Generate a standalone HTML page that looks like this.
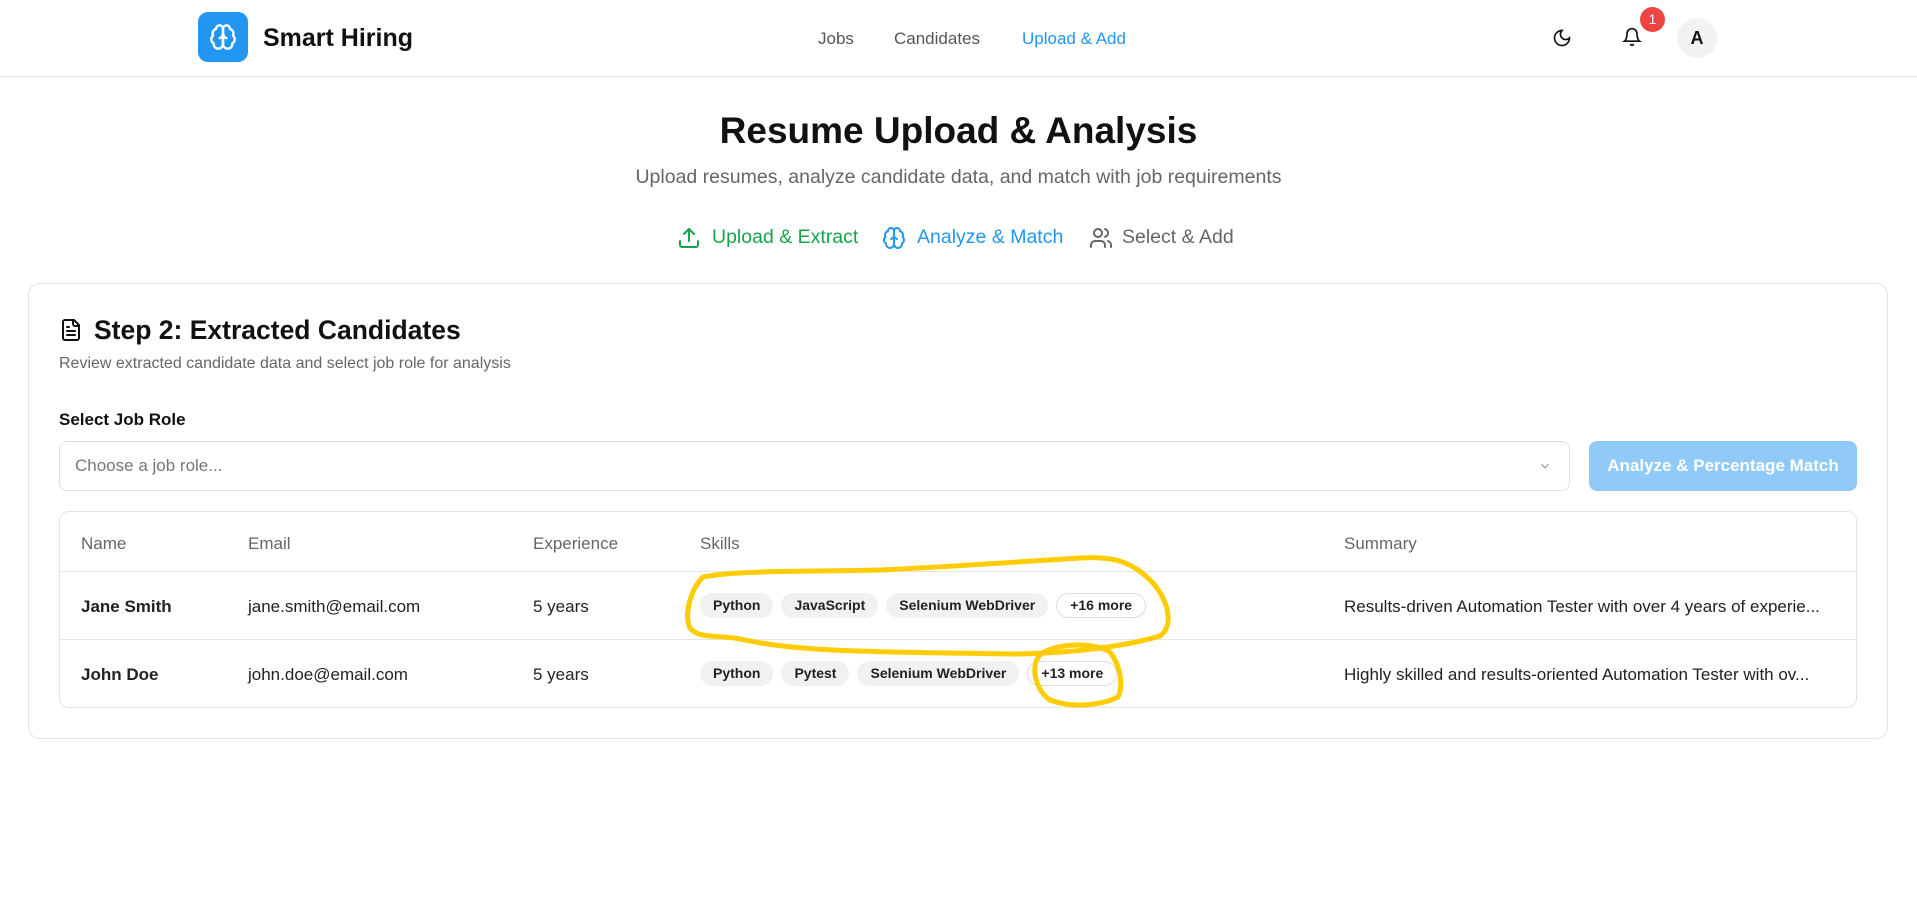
<!DOCTYPE html>
<html><head><meta charset="utf-8"><style>
*{box-sizing:border-box;margin:0;padding:0}
body{width:1917px;height:902px;background:#fff;font-family:"Liberation Sans",sans-serif;color:#111;position:relative;overflow:hidden}
.abs{position:absolute}
header{position:absolute;left:0;top:0;width:1917px;height:77px;border-bottom:1px solid #e5e5e5;box-shadow:0 1px 3px rgba(0,0,0,.05)}
.logo{left:198px;top:12px;width:50px;height:50px;background:#2196f3;border-radius:10px;display:flex;align-items:center;justify-content:center}
.nav{top:28px;font-size:17px;color:#555}
.chip{display:inline-block;height:25px;line-height:25px;padding:0 13px;border-radius:13px;background:#f1f1f1;font-size:14px;color:#222;margin-right:8px;font-weight:600}
.chip.more{background:#fff;border:1px solid #ddd;line-height:23px}
.td{position:absolute;font-size:17px;color:#222}
.th{position:absolute;font-size:17px;color:#666;top:534px}
</style></head><body>
<header>
<div class="abs logo"><svg width="28" height="28" viewBox="0 0 24 24" fill="none" stroke="#fff" stroke-width="2" stroke-linecap="round" stroke-linejoin="round"><path d="M12 5a3 3 0 1 0-5.997.125 4 4 0 0 0-2.526 5.77 4 4 0 0 0 .556 6.588A4 4 0 1 0 12 18Z"/><path d="M12 5a3 3 0 1 1 5.997.125 4 4 0 0 1 2.526 5.77 4 4 0 0 1-.556 6.588A4 4 0 1 1 12 18Z"/><path d="M15 13a4.5 4.5 0 0 1-3-4 4.5 4.5 0 0 1-3 4"/><path d="M12 18V5"/></svg></div>
<div class="abs" style="left:263px;top:24px;font-size:25px;font-weight:700">Smart Hiring</div>
<div class="abs nav" style="left:818px;top:29px">Jobs</div>
<div class="abs nav" style="left:894px;top:29px">Candidates</div>
<div class="abs nav" style="left:1022px;top:29px;color:#2196f3">Upload &amp; Add</div>
<svg class="abs" style="left:1552px;top:28px" width="20" height="20" viewBox="0 0 24 24" fill="none" stroke="#111" stroke-width="2" stroke-linecap="round"><path d="M12 3a6 6 0 0 0 9 9 9 9 0 1 1-9-9Z"/></svg>
<svg class="abs" style="left:1622px;top:27px" width="20" height="20" viewBox="0 0 24 24" fill="none" stroke="#111" stroke-width="2" stroke-linecap="round"><path d="M6 8a6 6 0 0 1 12 0c0 7 3 9 3 9H3s3-2 3-9"/><path d="M10.3 21a1.94 1.94 0 0 0 3.4 0"/></svg>
<div class="abs" style="left:1640px;top:7px;width:25px;height:25px;border-radius:50%;background:#ef4444;color:#fff;font-size:14px;text-align:center;line-height:25px">1</div>
<div class="abs" style="left:1677px;top:18px;width:40px;height:40px;border-radius:50%;background:#f2f2f2;text-align:center;line-height:40px;font-size:18px;font-weight:600">A</div>
</header>
<div class="abs" style="left:0;width:1917px;top:110px;text-align:center;font-size:37px;font-weight:700">Resume Upload &amp; Analysis</div>
<div class="abs" style="left:0;width:1917px;top:166px;text-align:center;font-size:19.5px;color:#666">Upload resumes, analyze candidate data, and match with job requirements</div>
<svg class="abs" style="left:677px;top:226px" width="24" height="24" viewBox="0 0 24 24" fill="none" stroke="#16a34a" stroke-width="2" stroke-linecap="round" stroke-linejoin="round"><path d="M21 15v4a2 2 0 0 1-2 2H5a2 2 0 0 1-2-2v-4"/><path d="M17 8l-5-5-5 5"/><path d="M12 3v12"/></svg>
<div class="abs" style="left:712px;top:226px;font-size:19.5px;color:#16a34a">Upload &amp; Extract</div>
<svg class="abs" style="left:882px;top:226px" width="24" height="24" viewBox="0 0 24 24" fill="none" stroke="#2196f3" stroke-width="2" stroke-linecap="round" stroke-linejoin="round"><path d="M12 5a3 3 0 1 0-5.997.125 4 4 0 0 0-2.526 5.77 4 4 0 0 0 .556 6.588A4 4 0 1 0 12 18Z"/><path d="M12 5a3 3 0 1 1 5.997.125 4 4 0 0 1 2.526 5.77 4 4 0 0 1-.556 6.588A4 4 0 1 1 12 18Z"/><path d="M15 13a4.5 4.5 0 0 1-3-4 4.5 4.5 0 0 1-3 4"/><path d="M12 18V5"/></svg>
<div class="abs" style="left:917px;top:226px;font-size:19.5px;color:#2196f3">Analyze &amp; Match</div>
<svg class="abs" style="left:1089px;top:226px" width="24" height="24" viewBox="0 0 24 24" fill="none" stroke="#666" stroke-width="2" stroke-linecap="round" stroke-linejoin="round"><path d="M16 21v-2a4 4 0 0 0-4-4H6a4 4 0 0 0-4 4v2"/><circle cx="9" cy="7" r="4"/><path d="M22 21v-2a4 4 0 0 0-3-3.87"/><path d="M16 3.13a4 4 0 0 1 0 7.75"/></svg>
<div class="abs" style="left:1122px;top:226px;font-size:19.5px;color:#666">Select &amp; Add</div>

<div class="abs" style="left:28px;top:283px;width:1860px;height:456px;border:1px solid #e3e3e3;border-radius:12px"></div>
<svg class="abs" style="left:59px;top:318px" width="24" height="24" viewBox="0 0 24 24" fill="none" stroke="#111" stroke-width="2" stroke-linecap="round" stroke-linejoin="round"><path d="M15 2H6a2 2 0 0 0-2 2v16a2 2 0 0 0 2 2h12a2 2 0 0 0 2-2V7Z"/><path d="M14 2v4a2 2 0 0 0 2 2h4"/><path d="M10 9H8M16 13H8M16 17H8"/></svg>
<div class="abs" style="left:94px;top:315px;font-size:26.5px;font-weight:600">Step 2: Extracted Candidates</div>
<div class="abs" style="left:59px;top:355px;font-size:16px;color:#666">Review extracted candidate data and select job role for analysis</div>
<div class="abs" style="left:59px;top:410px;font-size:17px;font-weight:600">Select Job Role</div>
<div class="abs" style="left:59px;top:441px;width:1511px;height:50px;border:1px solid #e0e0e0;border-radius:8px"></div>
<div class="abs" style="left:75px;top:456px;font-size:17px;color:#777">Choose a job role...</div>
<svg class="abs" style="left:1538px;top:459px" width="14" height="14" viewBox="0 0 24 24" fill="none" stroke="#999" stroke-width="2"><path d="M6 9l6 6 6-6"/></svg>
<div class="abs" style="left:1589px;top:441px;width:268px;height:50px;background:#90caf9;border-radius:8px;color:#fff;font-size:17px;font-weight:700;text-align:center;line-height:50px">Analyze &amp; Percentage Match</div>

<div class="abs" style="left:59px;top:511px;width:1798px;height:197px;border:1px solid #e3e3e3;border-radius:10px"></div>
<div class="abs" style="left:60px;top:571px;width:1796px;height:1px;background:#e5e5e5"></div>
<div class="abs" style="left:60px;top:639px;width:1796px;height:1px;background:#e5e5e5"></div>
<div class="th" style="left:81px">Name</div>
<div class="th" style="left:248px">Email</div>
<div class="th" style="left:533px">Experience</div>
<div class="th" style="left:700px">Skills</div>
<div class="th" style="left:1344px">Summary</div>

<div class="td" style="left:81px;top:597px;font-weight:700">Jane Smith</div>
<div class="td" style="left:248px;top:597px">jane.smith@email.com</div>
<div class="td" style="left:533px;top:597px">5 years</div>
<div class="abs" style="left:700px;top:593px;white-space:nowrap"><span class="chip">Python</span><span class="chip">JavaScript</span><span class="chip">Selenium WebDriver</span><span class="chip more">+16 more</span></div>
<div class="td" style="left:1344px;top:597px">Results-driven Automation Tester with over 4 years of experie...</div>

<div class="td" style="left:81px;top:665px;font-weight:700">John Doe</div>
<div class="td" style="left:248px;top:665px">john.doe@email.com</div>
<div class="td" style="left:533px;top:665px">5 years</div>
<div class="abs" style="left:700px;top:661px;white-space:nowrap"><span class="chip">Python</span><span class="chip">Pytest</span><span class="chip">Selenium WebDriver</span><span class="chip more">+13 more</span></div>
<div class="td" style="left:1344px;top:665px">Highly skilled and results-oriented Automation Tester with ov...</div>

<svg class="abs" style="left:0;top:0" width="1917" height="902" fill="none" stroke="#ffcc00" stroke-width="5" stroke-linecap="round" stroke-linejoin="round">
<path d="M703 577 C690 590 684 615 690 628 C700 640 720 634 745 640 C800 652 880 652 1015 654 C1080 653 1130 645 1160 636 C1175 625 1168 598 1150 580 C1130 560 1110 556 1080 558 C1000 563 930 568 880 570 C800 572 740 570 703 577"/>
<path d="M1040 655 C1030 665 1035 690 1050 700 C1070 708 1100 706 1118 697 C1124 685 1120 665 1110 652 C1090 640 1050 645 1040 655"/>
</svg>
</body></html>
